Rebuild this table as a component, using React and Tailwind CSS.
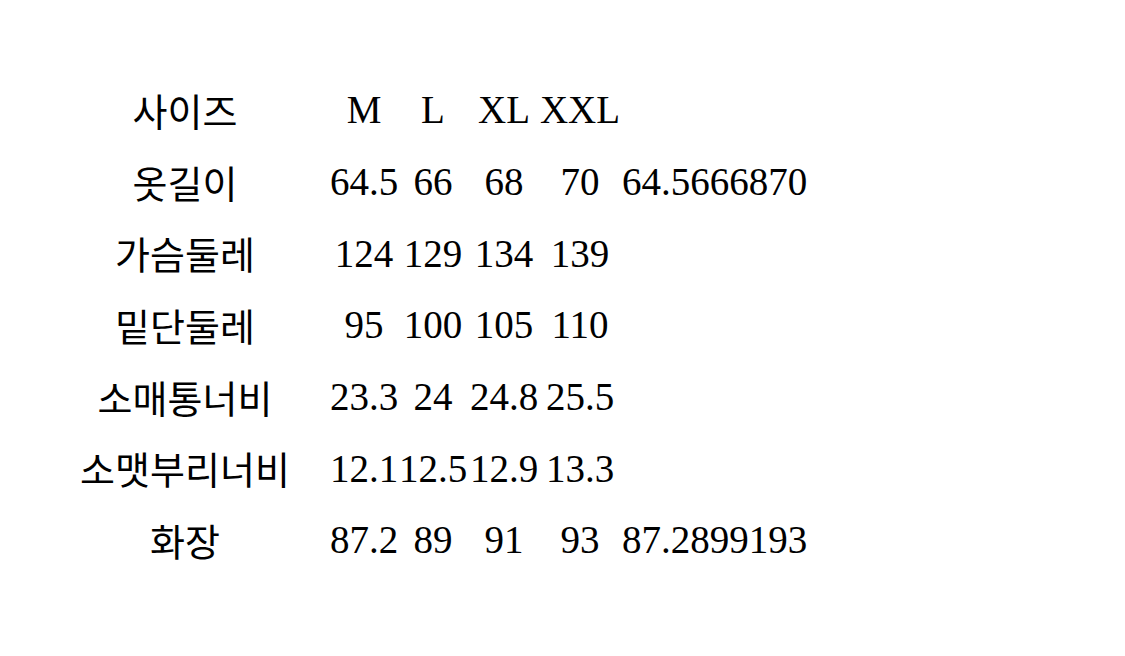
import React from "react";

const rows = [
  ["사이즈", "M", "L", "XL", "XXL", ""],
  ["옷길이", "64.5", "66", "68", "70", "64.5666870"],
  ["가슴둘레", "124", "129", "134", "139", ""],
  ["밑단둘레", "95", "100", "105", "110", ""],
  ["소매통너비", "23.3", "24", "24.8", "25.5", ""],
  ["소맷부리너비", "12.1", "12.5", "12.9", "13.3", ""],
  ["화장", "87.2", "89", "91", "93", "87.2899193"],
];

export default function App() {
  return (
    <div className="w-[1125px] h-[656px] bg-white text-black overflow-hidden">
      <div className="pt-[74px] pl-[40px] grid grid-cols-[290px_68px_70px_72px_80px_200px] auto-rows-[71.7px]">
        {rows.map((r, i) => (
          <React.Fragment key={i}>
            <div className="flex items-center justify-center whitespace-nowrap text-[38px] leading-none font-['Noto_Sans_CJK_KR','Noto_Sans',sans-serif]">
              {r[0]}
            </div>
            {r.slice(1, 5).map((c, j) => (
              <div
                key={j}
                className="flex items-center justify-center whitespace-nowrap text-[39px] leading-none font-['Liberation_Serif','Times_New_Roman',serif]"
              >
                {c}
              </div>
            ))}
            <div className="flex items-center justify-start pl-[2px] whitespace-nowrap text-[39px] leading-none font-['Liberation_Serif','Times_New_Roman',serif]">
              {r[5]}
            </div>
          </React.Fragment>
        ))}
      </div>
    </div>
  );
}
